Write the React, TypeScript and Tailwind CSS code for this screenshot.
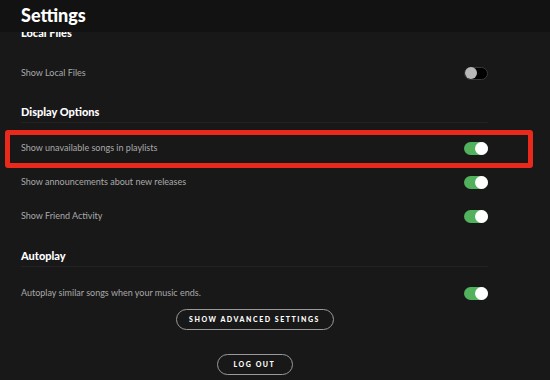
type Setting = { label: string; on: boolean };

const display: Setting[] = [
  { label: "Show unavailable songs in playlists", on: true },
  { label: "Show announcements about new releases", on: true },
  { label: "Show Friend Activity", on: true },
];

function Toggle({ on }: { on: boolean }) {
  return on ? (
    <div className="w-[24px] h-[13px] rounded-full bg-[#52b15c] flex items-center justify-end">
      <div className="w-[13px] h-[13px] rounded-full bg-white" />
    </div>
  ) : (
    <div className="w-[24px] h-[13px] rounded-full bg-black border border-[#3a3a3a] flex items-center justify-start">
      <div className="w-[12px] h-[12px] rounded-full bg-[#b8b8b8]" />
    </div>
  );
}

function Row({ label, on }: Setting) {
  return (
    <div className="h-[34px] flex items-center justify-between">
      <span className="text-[9px] text-[#a9a9a9]">{label}</span>
      <Toggle on={on} />
    </div>
  );
}

function Heading({ children, className = "" }: { children: string; className?: string }) {
  return (
    <h2 className={`h-[21px] flex items-center text-[11px] font-black text-white border-b border-[#232323] ${className}`}>
      {children}
    </h2>
  );
}

export default function App() {
  return (
    <div
      className="relative w-[550px] h-[380px] bg-[#181818] flex flex-col overflow-hidden"
      style={{ fontFamily: "Lato, 'Liberation Sans', sans-serif" }}
    >
      <header className="relative z-10 h-[32px] shrink-0 bg-[#121212] px-[21px] flex items-center">
        <h1 className="text-[18px] font-black text-white leading-none -mt-[2px]">Settings</h1>
      </header>

      <div className="flex-1 pl-[21px] pr-[62px]">
        <Heading className="-mt-[9px] border-transparent">Local Files</Heading>
        <div className="mt-[12px]">
          <Row label="Show Local Files" on={false} />
        </div>

        <Heading className="mt-[12px]">Display Options</Heading>
        <div className="mt-[8px]">
          {display.map((s) => (
            <Row key={s.label} {...s} />
          ))}
        </div>

        <Heading className="mt-[13px]">Autoplay</Heading>
        <div className="mt-[9px]">
          <Row label="Autoplay similar songs when your music ends." on={true} />
        </div>

        <div className="flex flex-col items-center -mt-[1px]">
          <button className="w-[158px] h-[21px] rounded-full border-[1.5px] border-[#9a9a9a] text-white text-[7px] font-black tracking-[0.22em]">
            SHOW ADVANCED SETTINGS
          </button>
          <button className="mt-[24px] w-[76px] h-[21px] rounded-full border-[1.5px] border-[#9a9a9a] text-white text-[7px] font-black tracking-[0.22em]">
            LOG OUT
          </button>
        </div>
      </div>

      {/* annotation box */}
      <div className="absolute left-[5px] top-[130px] w-[528px] h-[38px] border-[5px] border-[#e8291c] rounded-[3px]" />
    </div>
  );
}
